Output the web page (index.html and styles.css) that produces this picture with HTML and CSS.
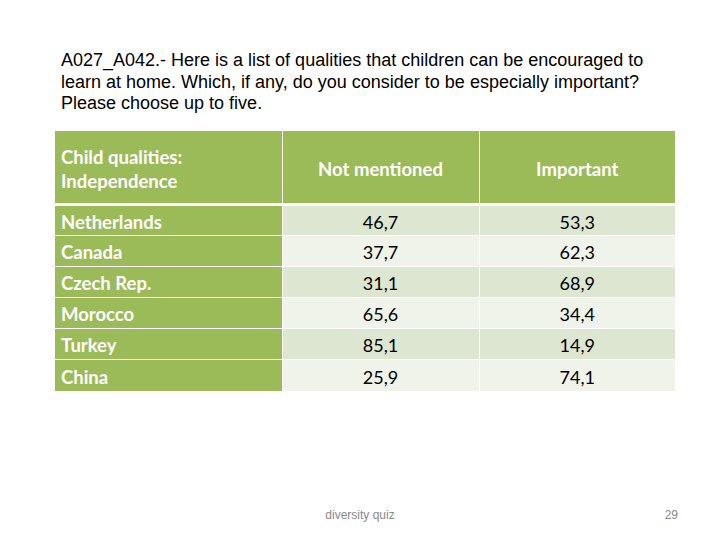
FILE: index.html
```html
<!DOCTYPE html>
<html>
<head>
<meta charset="utf-8">
<link rel="stylesheet" href="styles.css">
</head>
<body>
<div class="slide">
  <p class="question">A027_A042.- Here is a list of qualities that children can be encouraged to learn at home. Which, if any, do you consider to be especially important? Please choose up to five.</p>
  <table class="data">
    <thead>
      <tr>
        <th class="label">Child qualities:<br>Independence</th>
        <th>Not mentioned</th>
        <th>Important</th>
      </tr>
    </thead>
    <tbody>
      <tr class="odd"><th class="label">Netherlands</th><td>46,7</td><td>53,3</td></tr>
      <tr class="even"><th class="label">Canada</th><td>37,7</td><td>62,3</td></tr>
      <tr class="odd"><th class="label">Czech Rep.</th><td>31,1</td><td>68,9</td></tr>
      <tr class="even"><th class="label">Morocco</th><td>65,6</td><td>34,4</td></tr>
      <tr class="odd"><th class="label">Turkey</th><td>85,1</td><td>14,9</td></tr>
      <tr class="even"><th class="label">China</th><td>25,9</td><td>74,1</td></tr>
    </tbody>
  </table>
  <div class="footer">
    <span class="foot-title">diversity quiz</span>
    <span class="page-num">29</span>
  </div>
</div>
</body>
</html>
```
FILE: styles.css
```css
* { box-sizing: border-box; }
html, body {
  margin: 0;
  padding: 0;
  background: #ffffff;
}
.slide {
  position: relative;
  width: 720px;
  height: 540px;
  padding: 50px 0 0 61px;
}
.question {
  margin: 0;
  width: 600px;
  font-family: "Liberation Sans", Arial, sans-serif;
  font-size: 18px;
  line-height: 21.6px;
  color: #000;
}
.data {
  margin: 16px 0 0 -6px;
  border-collapse: collapse;
  font-family: Lato, "Open Sans", sans-serif;
  font-size: 18.5px;
}
.data th, .data td {
  padding: 0;
  border: 1px solid #fff;
}
.data thead th {
  height: 74px;
  background: #9bbb59;
  color: #fff;
  font-weight: bold;
  text-align: center;
  border-top: none;
  border-bottom: 3px solid #fff;
  line-height: 24px;
  padding-top: 3px;
}
.data thead th:nth-child(1) { width: 227px; }
.data thead th:nth-child(2) { width: 197px; }
.data thead th:nth-child(3) { width: 196px; }
.data th.label {
  text-align: left;
  padding-left: 6px;
  background: #9bbb59;
  color: #fff;
  font-weight: bold;
}
.data tbody th, .data tbody td {
  height: 31px;
  padding-top: 2px;
}
.data tbody td {
  text-align: center;
  color: #000;
  font-size: 18px;
}
.data tr.odd td { background: #dde6d0; }
.data tr.even td { background: #eff3ea; }
.data th:first-child, .data td:first-child { border-left: none; }
.data th:last-child, .data td:last-child { border-right: none; }
.data tbody tr:last-child th, .data tbody tr:last-child td { border-bottom: none; }
.footer {
  position: absolute;
  left: 0;
  right: 0;
  top: 508px;
  height: 16px;
  font-family: "Liberation Sans", Arial, sans-serif;
  font-size: 12px;
  color: #8a8a8a;
}
.foot-title {
  position: absolute;
  left: 0;
  right: 0;
  text-align: center;
}
.page-num {
  position: absolute;
  right: 42px;
}
```
